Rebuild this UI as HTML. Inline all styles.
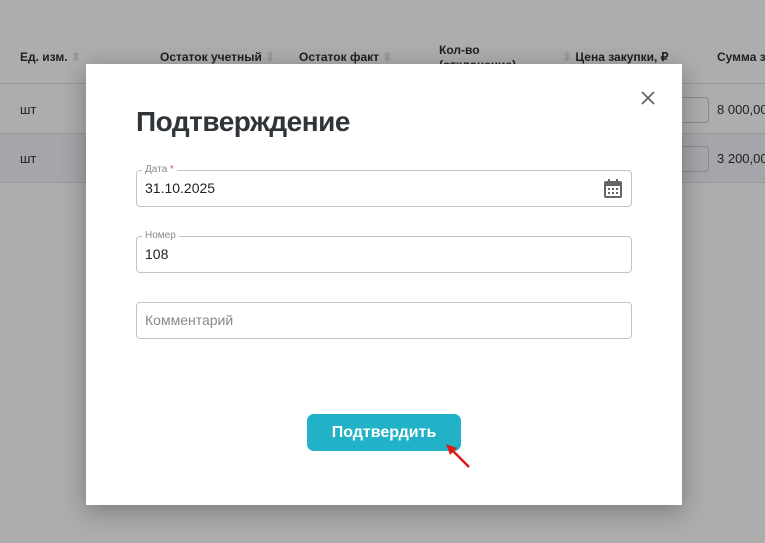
<!DOCTYPE html>
<html><head><meta charset="utf-8"><style>
*{box-sizing:border-box;margin:0;padding:0}
body{width:765px;height:543px;overflow:hidden;background:#adadad;font-family:"Liberation Sans",sans-serif;position:relative}
.hdr{position:absolute;top:0;left:0;width:765px;height:84px;border-bottom:1px solid #9a9a9a}
.h{position:absolute;top:50px;font-size:12px;font-weight:bold;color:#1f1f1f;white-space:nowrap}
.row{position:absolute;left:0;width:765px;height:49px;border-bottom:1px solid #999}
.row span{position:absolute;top:17px;font-size:13px;color:#1f1f1f;white-space:nowrap}
.inp{position:absolute;left:640px;top:12px;width:69px;height:26px;border:1px solid #8a8a8a;border-radius:4px}
.modal{position:absolute;left:86px;top:64px;width:596px;height:441px;background:#fff;box-shadow:0 6px 24px rgba(0,0,0,.3)}
.title{position:absolute;left:50px;top:42px;font-size:28px;font-weight:bold;color:#2f3439;letter-spacing:-0.5px}
.f{position:absolute;left:50px;width:496px;height:37px;border:1px solid #c4c4c4;border-radius:4px}
.lab{position:absolute;left:5px;top:-7px;background:#fff;padding:0 3px;font-size:10px;color:#888;line-height:12px}
.val{position:absolute;left:8px;top:9px;font-size:14px;color:#222}
.btn{position:absolute;left:221px;top:350px;width:154px;height:37px;background:#22b2c7;border-radius:7px;color:#fff;font-weight:bold;font-size:16px;text-align:center;line-height:37px}
</style></head><body>
<div class="hdr">
<div class="h" style="left:20px">Ед. изм. <span style="color:#999">⬍</span></div>
<div class="h" style="left:160px">Остаток учетный <span style="color:#999">⬍</span></div>
<div class="h" style="left:299px">Остаток факт <span style="color:#999">⬍</span></div>
<div class="h" style="left:439px;top:43px;line-height:15px">Кол-во<br>(отклонение)</div>
<div class="h" style="left:562px"><span style="color:#999">⬍</span> Цена закупки, ₽</div>
<div class="h" style="left:717px">Сумма з</div>
</div>
<div class="row" style="top:85px"><span style="left:20px">шт</span><div class="inp"></div><span style="left:717px">8 000,00</span></div>
<div class="row" style="top:134px;background:#a4a6ab"><span style="left:20px">шт</span><div class="inp"></div><span style="left:717px">3 200,00</span></div>
<div class="modal">
<svg style="position:absolute;left:555px;top:27px" width="14" height="14" viewBox="0 0 14 14"><path d="M1 1L13 13M13 1L1 13" stroke="#666" stroke-width="1.8"/></svg>
<div class="title">Подтверждение</div>
<div class="f" style="top:106px"><div class="lab">Дата <span style="color:#d9534f">*</span></div><div class="val">31.10.2025</div>
<svg style="position:absolute;right:9px;top:8px" width="18" height="19" viewBox="0 0 18 19"><rect x="4" y="0" width="2" height="4" fill="#666"/><rect x="12" y="0" width="2" height="4" fill="#666"/><rect x="0" y="2" width="18" height="17" rx="2" fill="#666"/><rect x="2" y="7" width="14" height="10" fill="#fff"/><g fill="#666"><rect x="4" y="9" width="2" height="2"/><rect x="8" y="9" width="2" height="2"/><rect x="12" y="9" width="2" height="2"/><rect x="4" y="13" width="2" height="2"/><rect x="8" y="13" width="2" height="2"/><rect x="12" y="13" width="2" height="2"/></g></svg></div>
<div class="f" style="top:172px"><div class="lab">Номер</div><div class="val">108</div></div>
<div class="f" style="top:238px"><div class="val" style="color:#888">Комментарий</div></div>
<div class="btn">Подтвердить</div>
<svg style="position:absolute;left:357px;top:377px" width="30" height="30" viewBox="0 0 30 30"><path d="M26 26L8 8" stroke="#e01818" stroke-width="2.5"/><path d="M3 3L14 7L7 14Z" fill="#e01818"/></svg>
</div>
</body></html>
